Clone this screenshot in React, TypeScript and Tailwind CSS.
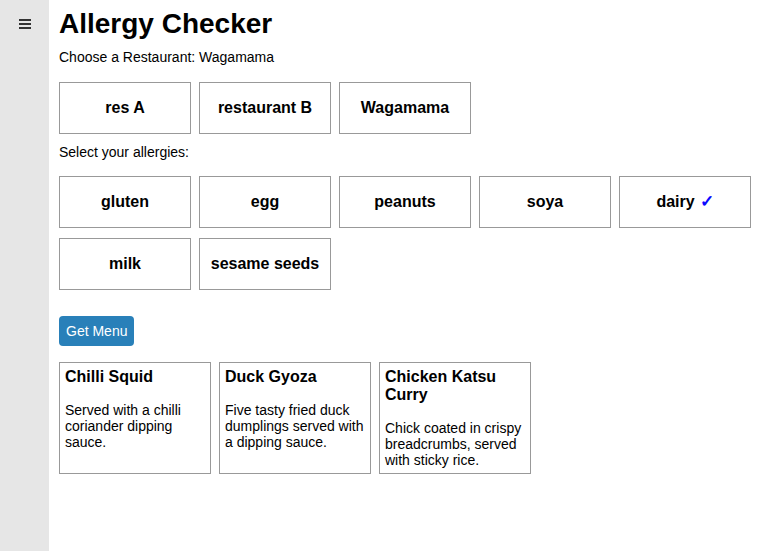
import { useState } from "react";

const restaurants = ["res A", "restaurant B", "Wagamama"];
const allergies = ["gluten", "egg", "peanuts", "soya", "dairy", "milk", "sesame seeds"];

const menu = [
  { name: "Chilli Squid", desc: "Served with a chilli coriander dipping sauce." },
  { name: "Duck Gyoza", desc: "Five tasty fried duck dumplings served with a dipping sauce." },
  { name: "Chicken Katsu Curry", desc: "Chick coated in crispy breadcrumbs, served with sticky rice." },
];

export default function App() {
  const [restaurant, setRestaurant] = useState("Wagamama");
  const [selected, setSelected] = useState<string[]>(["dairy"]);

  const toggle = (a: string) =>
    setSelected((prev) => (prev.includes(a) ? prev.filter((x) => x !== a) : [...prev, a]));

  return (
    <div className="flex min-h-[551px] bg-white text-black font-['Liberation_Sans',Arial,sans-serif]">
      {/* Sidebar */}
      <div className="w-[49px] shrink-0 bg-[#e6e6e6] flex justify-center pt-[19px]">
        <div className="flex flex-col gap-[2px] w-[12px] h-[10px]">
          <span className="block h-[2px] bg-[#333]" />
          <span className="block h-[2px] bg-[#333]" />
          <span className="block h-[2px] bg-[#333]" />
        </div>
      </div>

      {/* Main */}
      <div className="flex-1 px-[10px] pt-[8px]">
        <h1 className="text-[28px] font-bold leading-[32px]">Allergy Checker</h1>
        <p className="mt-[9px] text-[14px] leading-[16px]">Choose a Restaurant: {restaurant}</p>

        <div className="mt-[17px] flex flex-wrap gap-x-2 gap-y-[10px]">
          {restaurants.map((r) => (
            <button
              key={r}
              onClick={() => setRestaurant(r)}
              className="w-[132px] h-[52px] border border-[#999] bg-white text-[16px] font-bold"
            >
              {r}
            </button>
          ))}
        </div>

        <p className="mt-[10px] text-[14px] leading-[16px]">Select your allergies:</p>

        <div className="mt-[16px] flex flex-wrap gap-x-2 gap-y-[10px] max-w-[700px]">
          {allergies.map((a) => (
            <button
              key={a}
              onClick={() => toggle(a)}
              className="w-[132px] h-[52px] border border-[#999] bg-white text-[16px] font-bold"
            >
              {a}
              {selected.includes(a) && <span className="ml-[5px] text-[17px] text-[#0a0aff]">✓</span>}
            </button>
          ))}
        </div>

        <button className="mt-[26px] h-[30px] px-[7px] rounded-[4px] bg-[#2980b9] text-white text-[14px]">
          Get Menu
        </button>

        <div className="mt-[16px] flex gap-2">
          {menu.map((m) => (
            <div key={m.name} className="w-[152px] border border-[#999] p-[5px]">
              <h3 className="text-[16px] font-bold leading-[18px]">{m.name}</h3>
              <p className="mt-[16px] text-[14px] leading-[16px]">{m.desc}</p>
            </div>
          ))}
        </div>
      </div>
    </div>
  );
}
